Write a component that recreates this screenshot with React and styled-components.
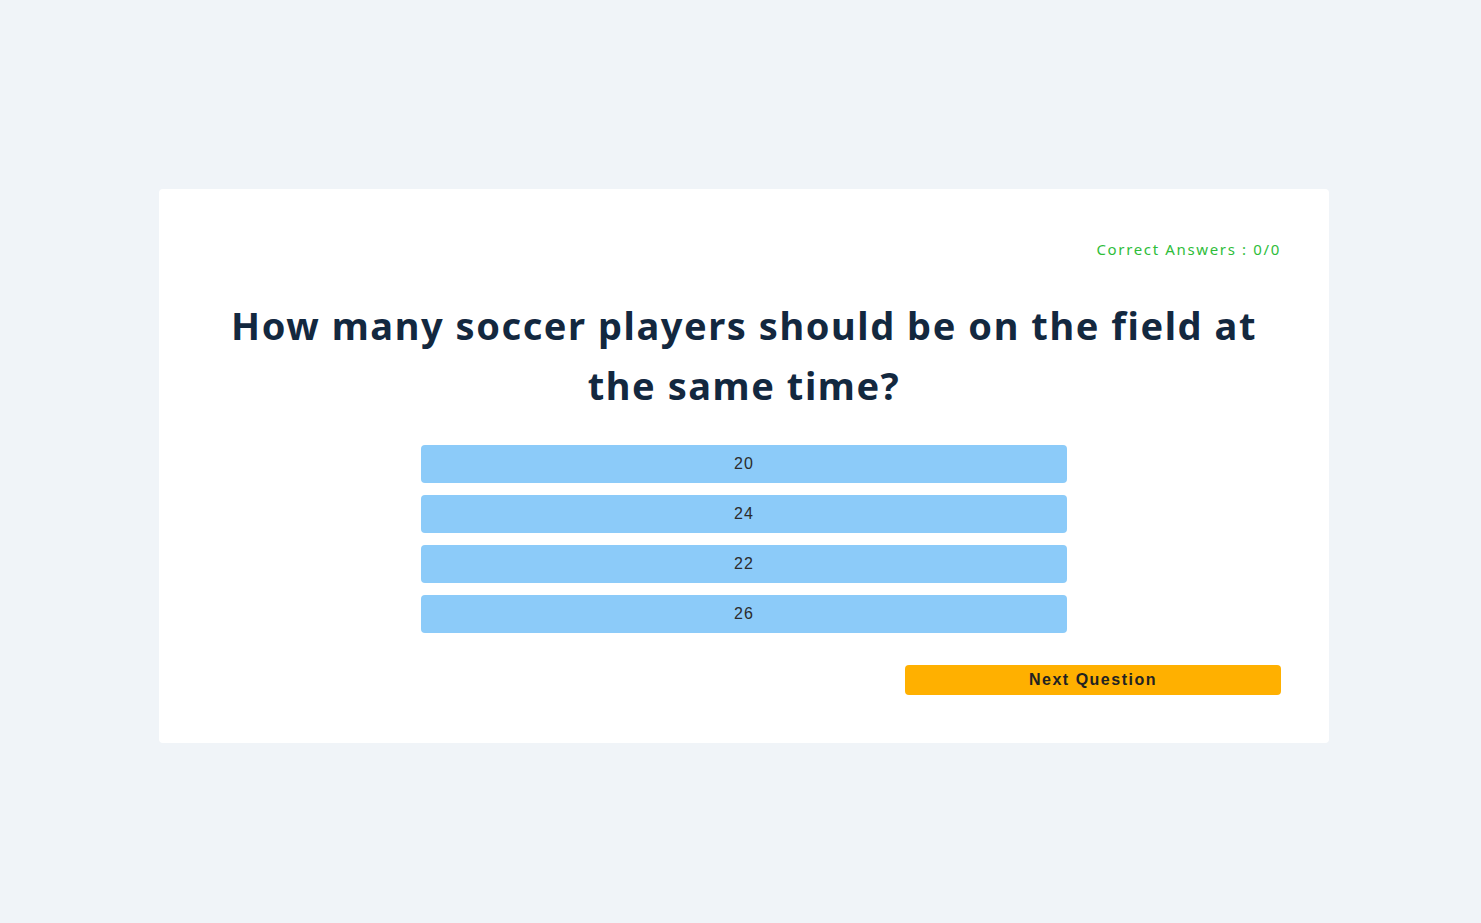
import React from "react";
import styled, { createGlobalStyle } from "styled-components";

const GlobalStyle = createGlobalStyle`
  * {
    box-sizing: border-box;
  }
  body {
    margin: 0;
    background: #f0f4f8;
    font-family: "Noto Sans", "Open Sans", sans-serif;
  }
`;

const Page = styled.div`
  min-height: 100vh;
  display: flex;
  align-items: flex-start;
  padding: 189px 0 0 159px;
`;

const Card = styled.div`
  width: 1170px;
  background: #ffffff;
  border-radius: 4px;
  padding: 48px;
  display: flex;
  flex-direction: column;
`;

const Score = styled.div`
  text-align: right;
  color: #2ebd3a;
  font-size: 15px;
  letter-spacing: 1.65px;
  line-height: 24px;
`;

const Question = styled.h1`
  margin: 34px 0 30px;
  text-align: center;
  color: #13283f;
  font-size: 38px;
  line-height: 60px;
  font-weight: 700;
  letter-spacing: 1.55px;
`;

const Options = styled.div`
  width: 646px;
  align-self: center;
  display: flex;
  flex-direction: column;
  gap: 12px;
`;

const Option = styled.button`
  height: 38px;
  border: none;
  border-radius: 4px;
  background: #8ccbf9;
  color: #2b2b2b;
  font-family: "Liberation Sans", Arial, sans-serif;
  font-size: 16px;
  letter-spacing: 1px;
  cursor: pointer;
`;

const Footer = styled.div`
  display: flex;
  justify-content: flex-end;
  margin-top: 32px;
`;

const NextButton = styled.button`
  width: 376px;
  height: 30px;
  border: none;
  border-radius: 4px;
  background: #ffb000;
  color: #222;
  font-family: "Liberation Sans", Arial, sans-serif;
  font-size: 16px;
  font-weight: 700;
  letter-spacing: 1.5px;
  cursor: pointer;
`;

const answers = ["20", "24", "22", "26"];

export default function App() {
  return (
    <>
      <GlobalStyle />
      <Page>
        <Card>
          <Score>Correct Answers : 0/0</Score>
          <Question>
            How many soccer players should be on the field at the same time?
          </Question>
          <Options>
            {answers.map((a) => (
              <Option key={a}>{a}</Option>
            ))}
          </Options>
          <Footer>
            <NextButton>Next Question</NextButton>
          </Footer>
        </Card>
      </Page>
    </>
  );
}
